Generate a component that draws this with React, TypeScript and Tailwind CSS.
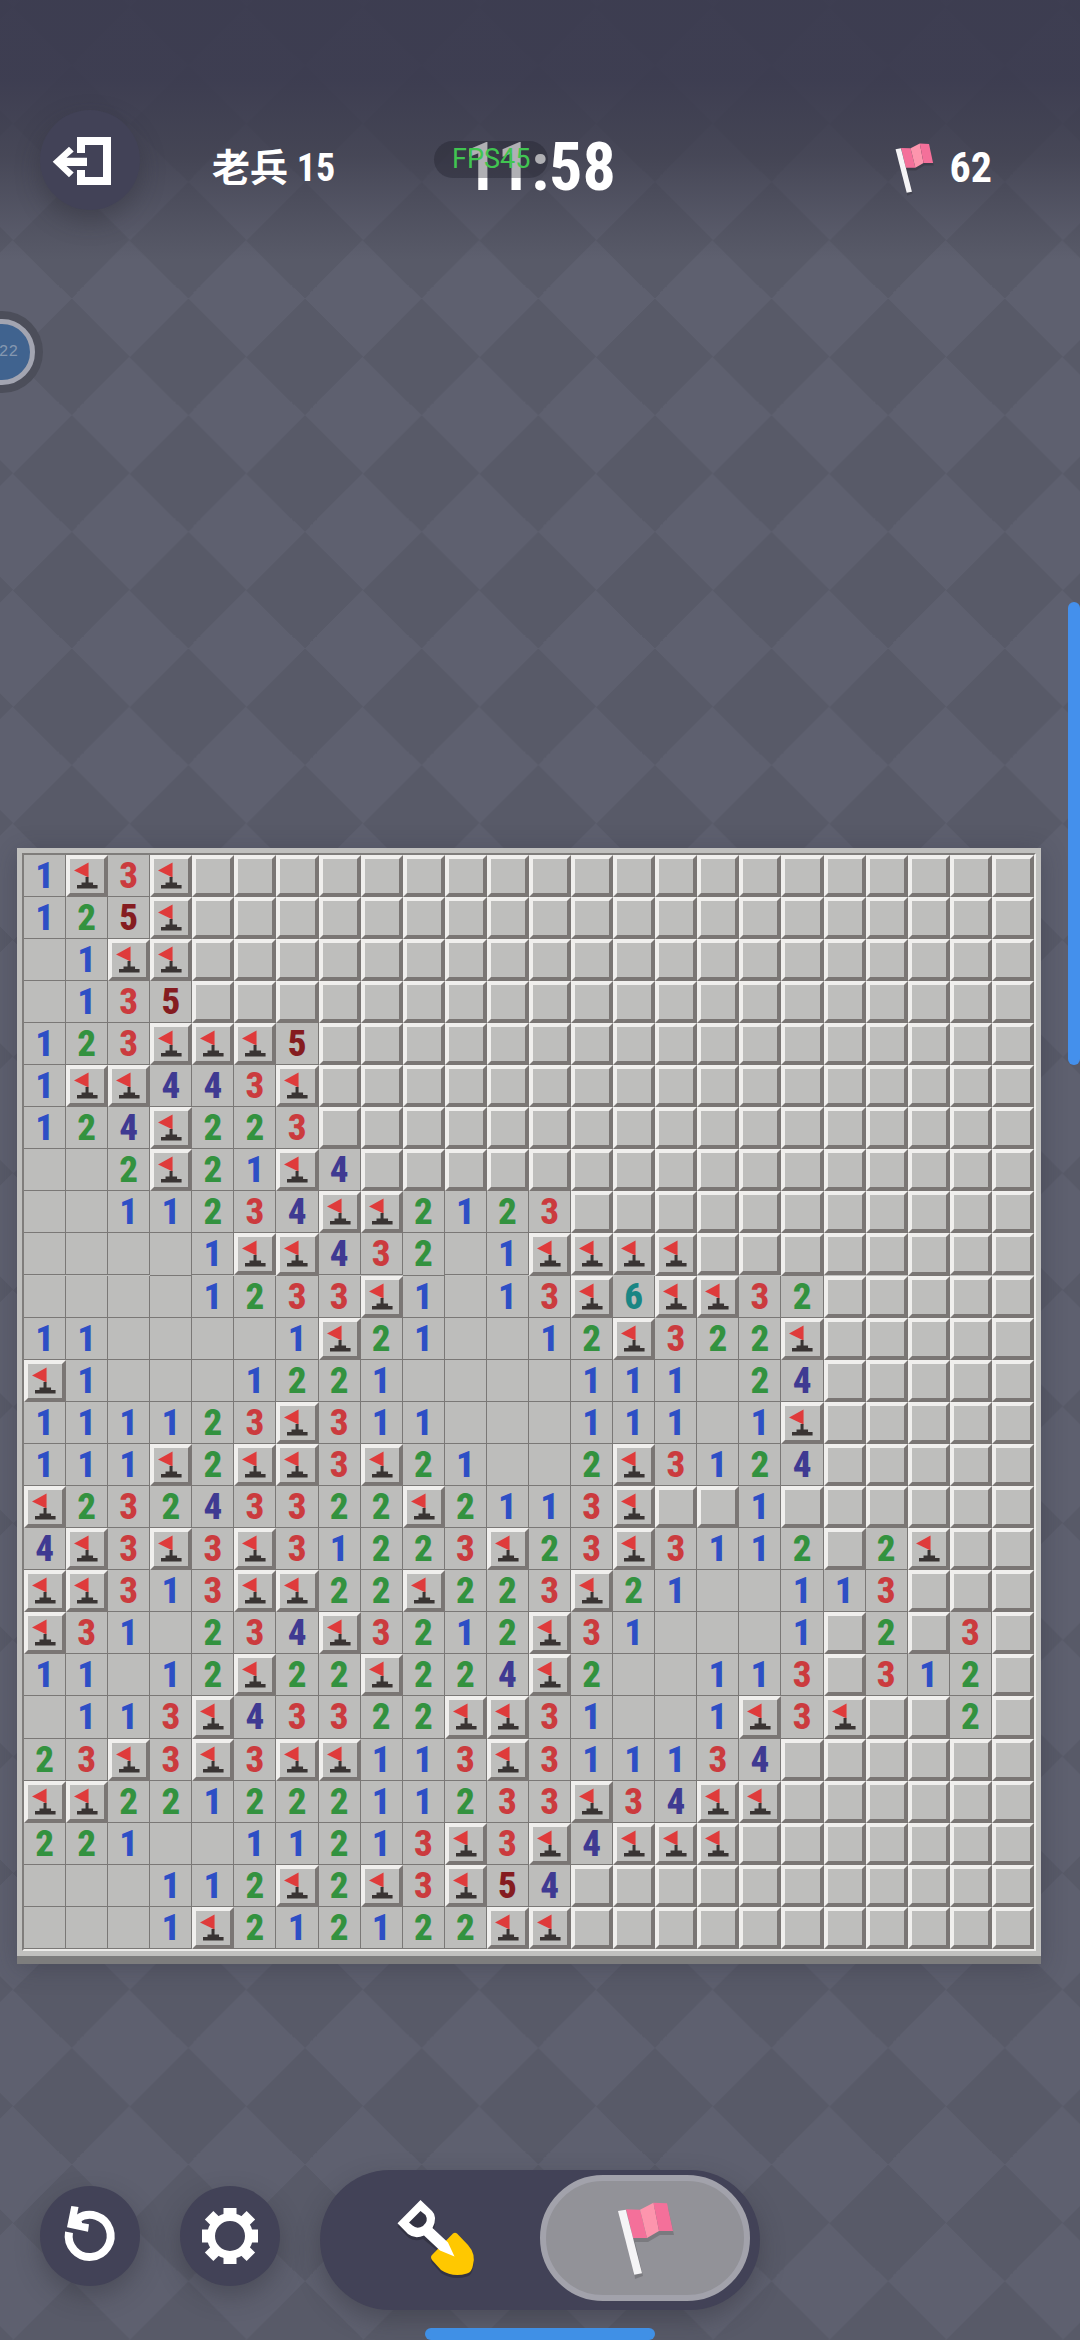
const H = "#";

// # hidden, F flag, . empty, digits are neighbour counts
const BOARD = [
  "1F3F",
  "125F",
  ".1FF",
  ".135",
  "123FFF5",
  "1FF443F",
  "124F223",
  "..2F21F4",
  "..11234FF2123",
  "....1FF432.1FFFF",
  "....1233F1.13F6FF32",
  "11....1F21..12F322F",
  "F1...1221....111.24",
  "111123F311...111.1F",
  "111F2FF3F21..2F3124",
  "F23243322F2113F##1",
  "4F3F3F31223F23F3112#2F",
  "FF313FF22F223F21..113",
  "F31.234F3212F31...1#2#3",
  "11.12F22F224F2..113#312",
  ".113F43322FF31..1F3F##2",
  "23F3F3FF113F311134",
  "FF22122211233F34FF",
  "221..11213F3F4FFF",
  "...112F2F3F54",
  "...1F212122FF",
].map((row) => row.padEnd(24, H).split(""));

const digitColors: Record<string, string> = {
  "1": "text-[#2d4fc5]",
  "2": "text-[#33923f]",
  "3": "text-[#cb3b3e]",
  "4": "text-[#3f3a92]",
  "5": "text-[#851c20]",
  "6": "text-[#1a8684]",
};

const MineFlag = () => (
  <svg viewBox="0 0 34 34" className="block w-full h-full" aria-hidden="true">
    <path d="M4 11.5 18.5 3.5V18.5Z" fill="#df3b3b" />
    <path d="M15.5 18h3v5.5h4.500v2.500h4.500v3.500H7V26h4.500v-2.500h4z" fill="#393433" />
  </svg>
);

const PinkFlag = ({ className }: { className: string }) => (
  <svg viewBox="0 0 70 85" className={className} aria-hidden="true">
    <path d="M18 19 30 19 43 12 58 12 64 39 50 39 38 46 25 46 33 80 25 83Z" fill="#000" opacity="0.16" />
    <path d="M16 13.300 30 13.700 37 42H23Z" fill="#f4709a" />
    <path d="M30 13.700 43.500 6.700 49 35 37 42Z" fill="#fd95ad" />
    <path d="M43.500 6.700 57 7.300 63 35H49Z" fill="#f4709a" />
    <path d="M8 15 15.800 13.700 32 77.300 24.300 78.700Z" fill="#f5f4f6" />
  </svg>
);

const ExitIcon = () => (
  <svg viewBox="0 0 100 100" className="w-full h-full" aria-hidden="true">
    <path d="M37 27H71V75H37V60H45V67H63V35H45V43H37Z" fill="#fff" />
    <path d="M12.700 51.700 29 36.700 33.700 41.500 26.500 47.700H47V56H26.500L33.700 62.500 29 67.300Z" fill="#fff" />
  </svg>
);

const RestartIcon = () => (
  <svg viewBox="0 0 100 100" className="w-full h-full" aria-hidden="true">
    <path d="M29 46.300A21 21 0 1 0 38 32.500" fill="none" stroke="#fff" strokeWidth="8" />
    <path d="M31.300 20 38.500 21 37 29 42 36 42 37 49 38.300 48 45.700 27 41.300Z" fill="#fff" />
  </svg>
);

const GearIcon = () => (
  <svg viewBox="0 0 100 100" className="w-full h-full" aria-hidden="true">
    <circle cx="50" cy="50" r="19" fill="none" stroke="#fff" strokeWidth="8" />
    {[0, 90, 180, 270].map((a) => (
      <rect key={a} x="43.5" y="22" width="13" height="10" fill="#fff" transform={`rotate(${a} 50 50)`} />
    ))}
    {[45, 135, 225, 315].map((a) => (
      <rect key={a} x="44" y="20.500" width="12" height="10" fill="#fff" transform={`rotate(${a} 50 50)`} />
    ))}
  </svg>
);

const ShovelIcon = () => (
  <svg viewBox="0 0 85 85" className="w-[85px] h-[85px]" aria-hidden="true">
    <g fill="#000" opacity="0.22" transform="translate(0 3)">
      <path d="M60 37.500Q62 36 64 37.500L75 49Q83 58 80 69 79 76 74 77.500 60 82 48 74L39 64Q37 61 39 59Z" />
      <path d="M27.500 4 4.500 27.500 16 39Q22 43 30 40L47 54 61 60 54 46 40 32Q45 21 39 15Z" />
    </g>
    <path d="M60 37.500Q62 36 64 37.500L75 49Q83 58 80 69 79 76 74 77.500 60 82 48 74L39 64Q37 61 39 59Z" fill="#ffc800" />
    <path
      fillRule="evenodd"
      d="M27.500 4 4.500 27.300 15 38Q22 43.500 31 39.500L47 54.500 61.500 60.500 55 46.500 39.500 32Q45 21 39 15ZM27.500 15 16 26.500 19.500 29.500Q24 33.500 30 30 36 25 32.500 19Z"
      fill="#fff"
    />
  </svg>
);

const Cell = ({ value }: { value: string }) => {
  if (value === H || value === "F") {
    return (
      <button
        aria-label={value === "F" ? "Flagged" : "Hidden"}
        className="aspect-square min-w-0 bg-[#bebebc] border-4 border-t-[#f0efed] border-l-[#f0efed] border-b-[#7a7674] border-r-[#7a7674]"
      >
        {value === "F" && <MineFlag />}
      </button>
    );
  }
  return (
    <div className="aspect-square min-w-0 bg-[#bdbdbb] border-r border-b border-[#7a7876] flex items-center justify-center">
      {value !== "." && (
        <span className={`text-[37px] leading-none font-extrabold ${digitColors[value]}`}>{value}</span>
      )}
    </div>
  );
};

const roundButton = "w-[100px] h-[100px] rounded-full bg-[#424257] shadow-[0_10px_24px_rgba(40,40,50,0.35)]";

const App = () => {
  return (
    <div className="relative min-h-screen overflow-hidden flex flex-col text-white font-['Liberation_Sans_Narrow','Roboto_Condensed',Roboto,'Noto_Sans_CJK_SC',sans-serif] bg-[repeating-conic-gradient(from_45deg,#5e606f_0_25%,#585a68_0_50%)] bg-[length:10.8vw_10.8vw] bg-[position:13px_7px]">
      <header className="h-[260px] pt-[110px] px-10 bg-linear-to-b from-[#3a3a4e]/90 from-30% via-[#3a3a4a]/65 via-60% to-[#3c3c4c]/0">
        <div className="h-[116px] grid grid-cols-[1fr_auto_1fr] items-center">
          <div className="h-full flex items-center gap-[72px]">
            <button aria-label="Exit" className={`${roundButton} self-start`}>
              <ExitIcon />
            </button>
            <span className="text-[38px] leading-none font-bold whitespace-nowrap">老兵 15</span>
          </div>
          <span className="text-[66px] leading-none font-bold">11:58</span>
          <div className="flex items-center justify-end gap-3 pr-12">
            <PinkFlag className="w-[48px] h-[58px]" />
            <span className="text-[42px] leading-none font-bold">62</span>
          </div>
        </div>
      </header>

      <main className="flex-1 flex items-end pl-[17px] pr-[39px] pb-[206px]">
        <div className="w-full bg-[#c0c0be] p-[5px] border-b-8 border-[#7d7d7d] shadow-[0_4px_24px_rgba(40,40,55,0.3)]">
          <div className="border-2 border-t-[#7f7d7b] border-l-[#7f7d7b] border-r-[#ecebe9] border-b-[#ecebe9] grid grid-cols-24">
            {BOARD.flatMap((row, y) => row.map((value, x) => <Cell key={`${y}-${x}`} value={value} />))}
          </div>
        </div>
      </main>

      <footer className="flex items-start gap-10 pl-10 pb-[30px]">
        <button aria-label="Restart" className={`${roundButton} mt-4`}>
          <RestartIcon />
        </button>
        <button aria-label="Settings" className={`${roundButton} mt-4`}>
          <GearIcon />
        </button>
        <div className="h-[140px] flex rounded-full bg-[#424257] px-[10px] pt-[5px] pb-[9px] shadow-[0_10px_24px_rgba(40,40,50,0.35)]">
          <button aria-label="Dig" className="w-[210px] flex items-center justify-center">
            <ShovelIcon />
          </button>
          <button
            aria-label="Flag"
            aria-pressed="true"
            className="w-[210px] flex items-center justify-center rounded-full bg-[#929298] border-[6px] border-[#a2a2ab]"
          >
            <PinkFlag className="w-[70px] h-[85px]" />
          </button>
        </div>
      </footer>

      {/* system overlays */}
      <div className="absolute top-[141px] left-[434px] h-[37px] px-[18px] rounded-full bg-[#1e1e28]/35 flex items-center font-[Roboto,sans-serif] text-[27px] leading-none text-[#41c551]">
        FPS45
      </div>
      <div className="absolute top-[311px] -left-[39px] w-[82px] h-[82px] rounded-full bg-[#4c4e5a] p-2">
        <div className="w-full h-full rounded-full bg-[#40638f] border-[5px] border-[#a3a5b1] flex items-center justify-end pr-3 font-['Liberation_Mono',monospace] text-[16px] leading-none text-[#8497b0]">
          22
        </div>
      </div>
      <div className="absolute top-[602px] right-0 w-3 h-[463px] rounded-full bg-[#4490ec]" />
      <div className="absolute bottom-0 left-1/2 -translate-x-1/2 w-[230px] h-3 rounded-full bg-[#4090e6]" />
    </div>
  );
};

export default App;
